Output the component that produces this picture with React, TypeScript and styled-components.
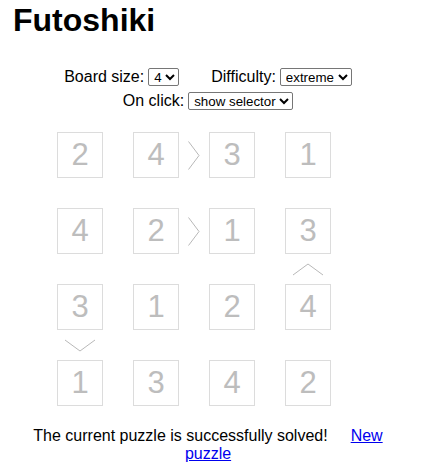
import React from "react";
import styled, { createGlobalStyle } from "styled-components";

const GlobalStyle = createGlobalStyle`
    body {
        margin: 0;
        font-family: "Liberation Sans", Arial, sans-serif;
        font-size: 16px;
        color: #000;
        background: #fff;
    }
`;

const Page = styled.div`
    padding: 0 8px;
`;

const Title = styled.h1`
    font-size: 32px;
    font-weight: bold;
    margin: 0;
    padding: 2px 0 0 5px;
`;

const Controls = styled.div`
    width: 400px;
    margin-top: 26px;
    display: flex;
    flex-direction: column;
    align-items: center;
`;

const ControlRow = styled.div`
    height: 24px;
    display: flex;
    align-items: center;
`;

const Field = styled.label<{ $gap?: number }>`
    display: flex;
    align-items: center;
    gap: 4px;
    margin-left: ${ props => props.$gap || 0 }px;
`;

const Select = styled.select<{ $w: number }>`
    width: ${ props => props.$w }px;
    height: 18px;
    padding: 0 0 0 1px;
    font-family: "Liberation Sans", Arial, sans-serif;
    font-size: 13.33px;
    border: 1px solid #767676;
    border-radius: 2px;
    background: #fff;
    color: #000;
`;

const Board = styled.div`
    margin: 19px 0 0 49px;
    display: grid;
    grid-template-columns: repeat(3, 46px 30px) 46px;
    grid-template-rows: repeat(3, 46px 30px) 46px;
`;

const Cell = styled.div`
    box-sizing: border-box;
    border: 1px solid #dcdcdc;
    display: flex;
    align-items: center;
    justify-content: center;
    font-size: 31px;
    color: #bdbdbd;
`;

const Gap = styled.div`
    display: flex;
    align-items: center;
    justify-content: center;
`;

const Status = styled.p`
    width: 400px;
    margin: 21px 0 0;
    text-align: center;
    line-height: 18px;
`;

const NewLink = styled.a`
    margin-left: 23px;
    color: #0000ee;
    text-decoration: underline;
    cursor: pointer;
`;

const values = [
    [2, 4, 3, 1],
    [4, 2, 1, 3],
    [3, 1, 2, 4],
    [1, 3, 4, 2],
];

// signs between horizontally adjacent cells: key "row-col" = sign after that col
const hSigns: Record<string, string> = { "0-1": ">", "1-1": ">" };
// signs between vertically adjacent cells: key "row-col" = sign below that row
const vSigns: Record<string, string> = { "1-3": "^", "2-0": "v" };

const Sign: React.FC<{ kind: string }> = ({ kind }) => {
    const stroke = { fill: "none", stroke: "#b8b8b8", strokeWidth: 1 };
    if (kind === ">") return <svg width="12" height="29" viewBox="0 0 12 29">
        <polyline points="0.5,0.5 11,14.5 0.5,28.5" { ...stroke }/>
    </svg>;
    if (kind === "^") return <svg width="30" height="13" viewBox="0 0 30 13">
        <polyline points="0,12 15,1 30,12" { ...stroke }/>
    </svg>;
    return <svg width="30" height="13" viewBox="0 0 30 13">
        <polyline points="0,1 15,12 30,1" { ...stroke }/>
    </svg>;
};

const App: React.FC = () => {
    const items: React.ReactNode[] = [];
    for (let r = 0; r < 7; r++) {
        for (let c = 0; c < 7; c++) {
            const key = `${ r }-${ c }`;
            if (r % 2 === 0 && c % 2 === 0) {
                items.push(<Cell key={ key }>{ values[r / 2][c / 2] }</Cell>);
            } else if (r % 2 === 0) {
                const s = hSigns[`${ r / 2 }-${ (c - 1) / 2 }`];
                items.push(<Gap key={ key }>{ s && <Sign kind={ s }/> }</Gap>);
            } else if (c % 2 === 0) {
                const s = vSigns[`${ (r - 1) / 2 }-${ c / 2 }`];
                items.push(<Gap key={ key }>{ s && <Sign kind={ s }/> }</Gap>);
            } else {
                items.push(<Gap key={ key }/>);
            }
        }
    }

    return <Page>
        <GlobalStyle/>
        <Title>Futoshiki</Title>
        <Controls>
            <ControlRow>
                <Field>Board size: <Select $w={ 31 } defaultValue="4">
                    <option>3</option><option>4</option><option>5</option>
                </Select></Field>
                <Field $gap={ 32 }>Difficulty: <Select $w={ 72 } defaultValue="extreme">
                    <option>easy</option><option>extreme</option>
                </Select></Field>
            </ControlRow>
            <ControlRow>
                <Field>On click: <Select $w={ 105 } defaultValue="show selector">
                    <option>show selector</option>
                </Select></Field>
            </ControlRow>
        </Controls>
        <Board>{ items }</Board>
        <Status>
            The current puzzle is successfully solved!<NewLink>New puzzle</NewLink>
        </Status>
    </Page>;
};

export default App;
